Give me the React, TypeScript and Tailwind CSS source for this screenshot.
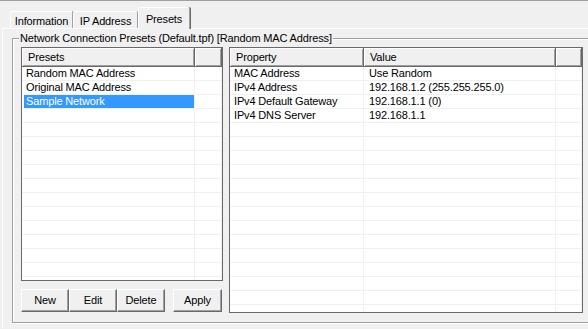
// Network presets tab page — classic Windows property-sheet look
import React from "react";

interface Column {
  key:   string;
  label: string;
  width: string;
}

const PRESET_COLS: Column[] = [
  { key: "name", label: "Presets", width: "w-[173px]" },
  { key: "fill", label: "",        width: "w-[27px]"  },
];

const PROP_COLS: Column[] = [
  { key: "prop",  label: "Property", width: "w-[134px]" },
  { key: "value", label: "Value",    width: "w-[192px]" },
  { key: "fill",  label: "",         width: "w-[26px]"  },
];

const PRESETS = ["Random MAC Address", "Original MAC Address", "Sample Network"];

const PROPERTIES: [string, string][] = [
  ["MAC Address",          "Use Random"],
  ["IPv4 Address",         "192.168.1.2 (255.255.255.0)"],
  ["IPv4 Default Gateway", "192.168.1.1 (0)"],
  ["IPv4 DNS Server",      "192.168.1.1"],
];

const SELECTED = 2;

// ─── Pieces ──────────────────────────────────────────────────────────────────

function Tab({ label, width, active }: { label: string; width: string; active?: boolean }) {
  return (
    <div
      className={
        active
          ? `relative z-10 -mb-px flex h-[22px] ${width} items-start justify-center rounded-t-[2px] border-l border-t border-white bg-[#f0f0f0] pt-[6px] shadow-[1px_0_0_#696969] [border-right:1px_solid_#a0a0a0]`
          : `flex h-[17px] ${width} items-start justify-center rounded-t-[2px] border-l border-t border-white pt-[4px] shadow-[1px_0_0_#696969] [border-right:1px_solid_#a0a0a0]`
      }
    >
      {label}
    </div>
  );
}

function HeaderRow({ cols }: { cols: Column[] }) {
  return (
    <div className="flex h-[19px] shrink-0">
      {cols.map((c) => (
        <div
          key={c.key}
          className={`${c.width} flex h-full shrink-0 items-center border-b border-r border-[#696969] bg-[#f0f0f0] pl-[6px] shadow-[inset_1px_1px_0_#fff,inset_-1px_-1px_0_#a0a0a0]`}
        >
          {c.label}
        </div>
      ))}
      <div className="h-full flex-1 border-b border-[#696969] bg-[#f0f0f0] shadow-[inset_1px_1px_0_#fff]" />
    </div>
  );
}

function GridRow({ cols, cells, selected }: { cols: Column[]; cells: string[]; selected?: boolean }) {
  return (
    <div className="flex h-[14px] shrink-0 border-b border-[#f0f0f0]">
      {cols.map((c, i) => (
        <div
          key={c.key}
          className={`${c.width} flex h-full shrink-0 items-center border-r border-[#f0f0f0] ${i === 0 ? "pl-[2px]" : "pl-[5px]"}`}
        >
          {i === 0 && selected ? (
            <span className="flex h-full w-full items-center bg-[#3399ff] pl-[2px] text-white">{cells[i]}</span>
          ) : (
            <span className={i === 0 ? "pl-[2px]" : ""}>{cells[i] ?? ""}</span>
          )}
        </div>
      ))}
    </div>
  );
}

function ListView({ cols, rows, selected, className }: {
  cols: Column[];
  rows: string[][];
  selected?: number;
  className: string;
}) {
  const filled = [...rows, ...Array.from({ length: 22 - rows.length }, () => [] as string[])];
  return (
    <div className={`flex flex-col overflow-hidden border border-[#696969] bg-white ${className}`}>
      <HeaderRow cols={cols} />
      {filled.map((r, i) => (
        <GridRow key={i} cols={cols} cells={r} selected={i === selected} />
      ))}
    </div>
  );
}

function Button({ label, width }: { label: string; width: string }) {
  return (
    <button
      type="button"
      className={`${width} flex h-[23px] items-center justify-center border-l border-t border-white bg-[#f0f0f0] shadow-[inset_-1px_-1px_0_#a0a0a0] [border-bottom:1px_solid_#696969] [border-right:1px_solid_#696969]`}
    >
      {label}
    </button>
  );
}

// ─── Page ────────────────────────────────────────────────────────────────────

export default function App() {
  return (
    <div className="h-[329px] w-[588px] overflow-hidden bg-[#f0f0f0] font-['Liberation_Sans',Arial,sans-serif] text-[11px] leading-none tracking-[-0.15px] text-black">
      <div className="h-px bg-[#a0a0a0]" />

      {/* Tab strip */}
      <div className="flex h-[27px] items-end pl-[10px]">
        <Tab label="Information" width="w-[63px]" />
        <Tab label="IP Address" width="w-[65px]" />
        <Tab label="Presets" width="w-[52px]" active />
      </div>

      {/* Tab panel — runs off the right edge */}
      <div className="ml-[2px] h-[300px] border-l border-t border-white pl-[9px] pt-[9px]">
        {/* Group box */}
        <div className="relative h-[285px] border-y border-l border-[#a0a0a0] shadow-[inset_1px_1px_0_#fff,0_1px_0_#fff]">
          <span className="absolute -top-[6px] left-[6px] bg-[#f0f0f0] px-[1px]">
            Network Connection Presets (Default.tpf) [Random MAC Address]
          </span>

          <div className="flex pl-[8px] pt-[8px]">
            {/* Presets column */}
            <div className="flex w-[202px] shrink-0 flex-col">
              <ListView
                cols={PRESET_COLS}
                rows={PRESETS.map((p) => [p])}
                selected={SELECTED}
                className="h-[234px] w-[202px]"
              />
              <div className="mt-[8px] flex">
                <Button label="New" width="w-[48px]" />
                <Button label="Edit" width="w-[48px]" />
                <Button label="Delete" width="w-[48px]" />
                <div className="w-[8px]" />
                <Button label="Apply" width="w-[49px]" />
              </div>
            </div>

            {/* Properties */}
            <ListView
              cols={PROP_COLS}
              rows={PROPERTIES.map(([k, v]) => [k, v])}
              className="ml-[6px] h-[266px] w-[354px] shrink-0"
            />
          </div>
        </div>
      </div>
    </div>
  );
}
